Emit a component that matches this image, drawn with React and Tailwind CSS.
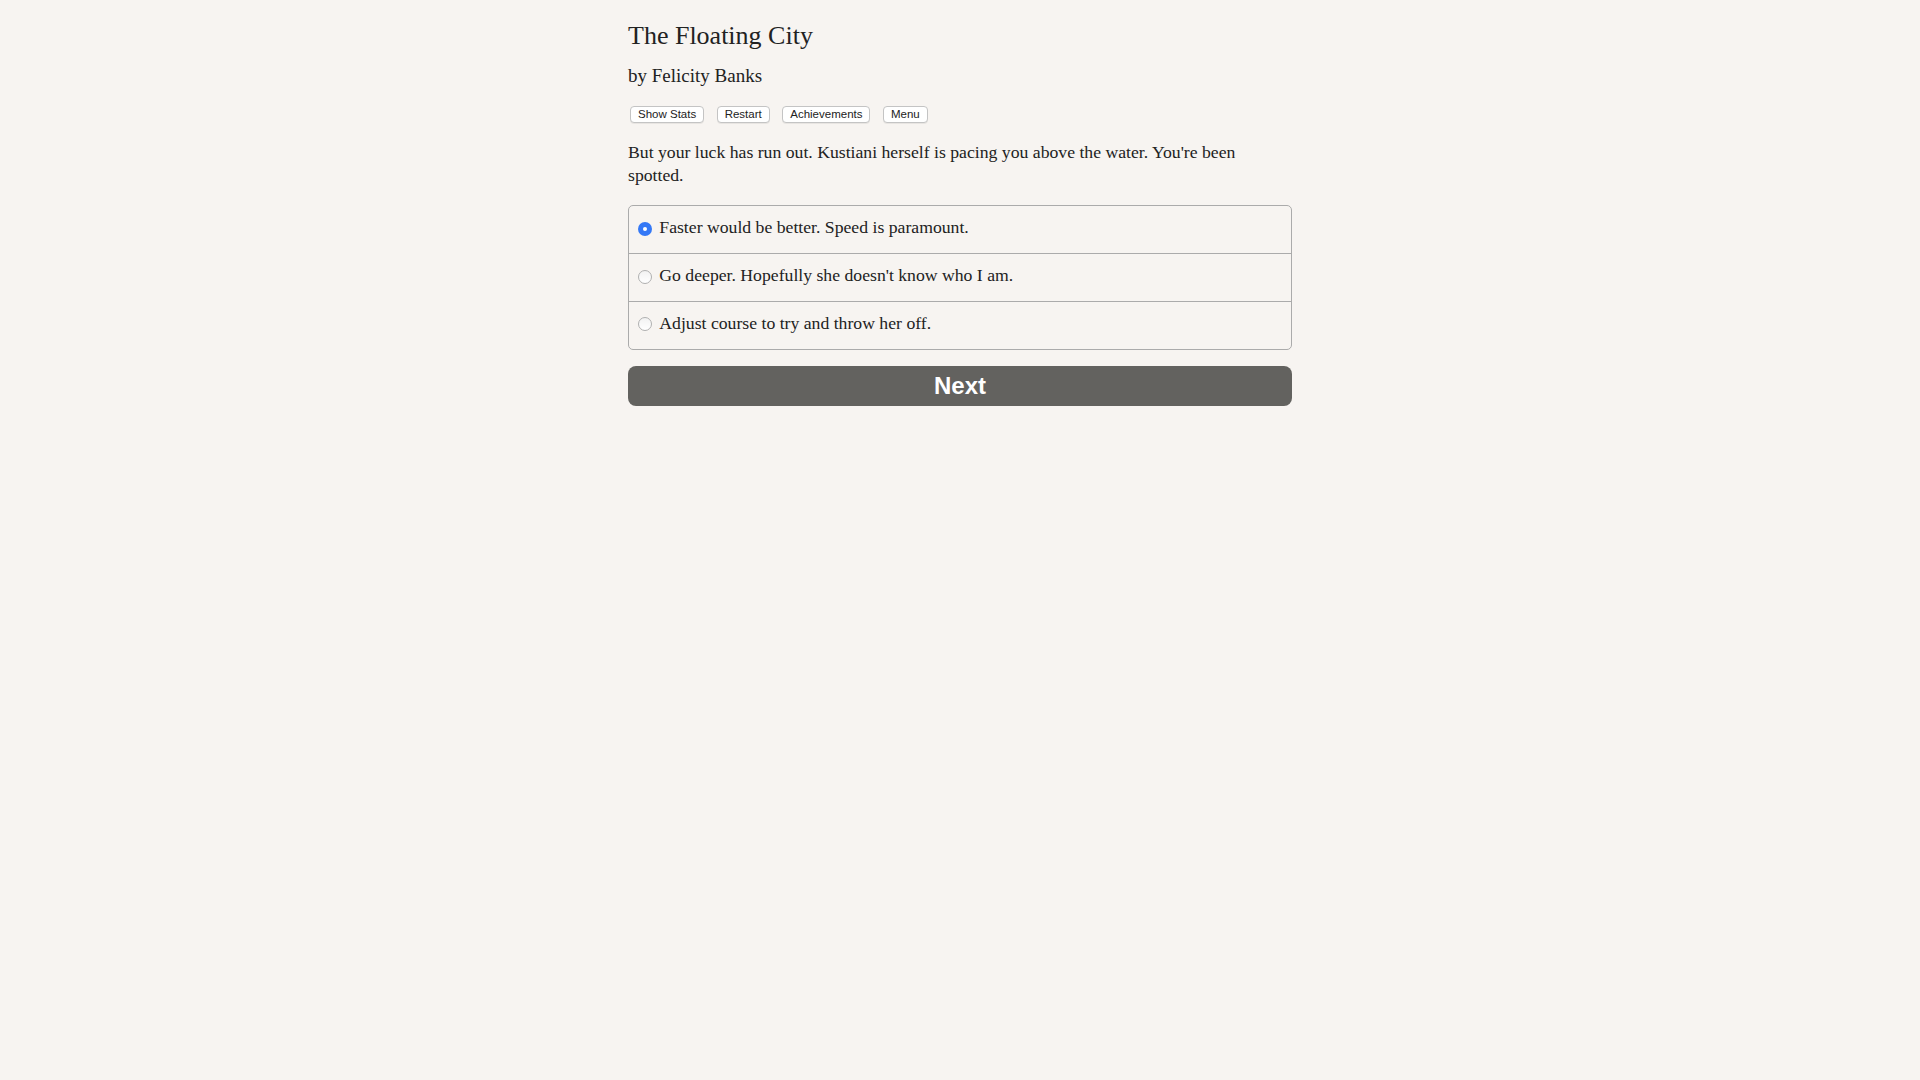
import React, { useState } from 'react';

const choices = [
  'Faster would be better. Speed is paramount.',
  "Go deeper. Hopefully she doesn't know who I am.",
  'Adjust course to try and throw her off.',
];

function Radio({ checked }) {
  // native-looking radio, drawn with divs
  return checked ? (
    <span className="mt-[5.5px] flex h-[14px] w-[14px] shrink-0 items-center justify-center rounded-full bg-[#3478f6]">
      <span className="h-[4px] w-[4px] rounded-full bg-white" />
    </span>
  ) : (
    <span className="mt-[5.5px] h-[14px] w-[14px] shrink-0 rounded-full border border-[#b0b0b0] bg-gradient-to-b from-[#f2f2f2] to-white" />
  );
}

export default function App() {
  const [selected, setSelected] = useState(0);

  return (
    <div className="min-h-screen bg-[#f7f4f1] font-['Liberation_Serif',serif] text-[#222]">
      <div className="mx-auto w-[664px] pt-[19.5px]">
        {/* Titre */}
        <h1 className="text-[26px] leading-[32px] font-normal">The Floating City</h1>
        <h2 className="mt-[12.8px] text-[19px] leading-[24px] font-normal">by Felicity Banks</h2>

        {/* Boutons */}
        <div className="mt-[17.4px] ml-[2px] flex gap-[12.5px] font-['Liberation_Sans',sans-serif]">
          {['Show Stats', 'Restart', 'Achievements', 'Menu'].map((label) => (
            <button
              key={label}
              className="rounded-[4px] border border-[#c4c4c4] bg-white px-[7px] text-[11.5px] leading-[15px] text-[#222] shadow-[0_1px_0_rgba(0,0,0,0.06)]"
            >
              {label}
            </button>
          ))}
        </div>

        {/* Texte */}
        <p className="mt-[18px] text-[17.7px] leading-[23.3px]">
          But your luck has run out. Kustiani herself is pacing you above the water. You're been spotted.
        </p>

        {/* Choix */}
        <div className="mt-[17.9px] overflow-hidden rounded-[5px] border border-[#ababab]">
          {choices.map((c, i) => (
            <label
              key={i}
              onClick={() => setSelected(i)}
              className={
                'flex cursor-pointer items-start gap-[7.3px] pl-[9px] pt-[10.2px] ' +
                (i > 0 ? 'h-[47.8px] border-t border-[#ababab]' : 'h-[46.8px]')
              }
            >
              <Radio checked={selected === i} />
              <span className="text-[17.7px] leading-[23.3px]">{c}</span>
            </label>
          ))}
        </div>

        <button className="mt-[16.7px] flex h-[40px] w-full items-center justify-center rounded-[8px] bg-[#63625f] font-['Liberation_Sans',sans-serif] text-[24px] font-bold text-white">
          Next
        </button>
      </div>
    </div>
  );
}
